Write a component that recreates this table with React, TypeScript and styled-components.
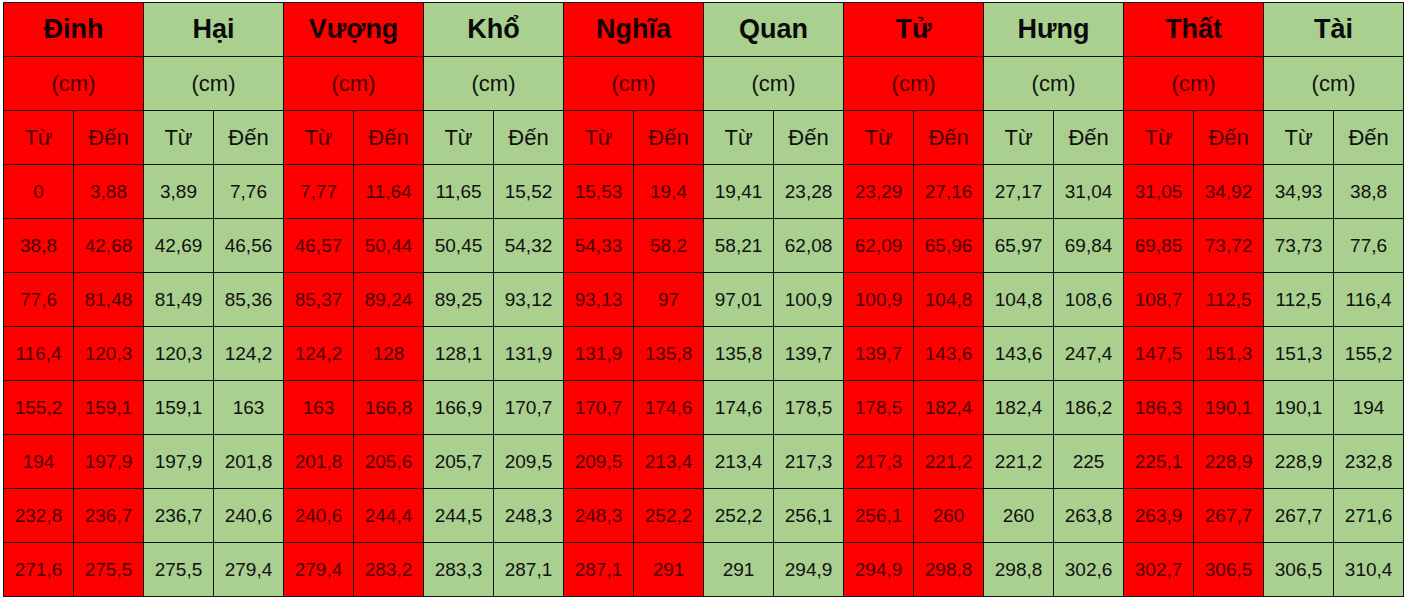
import styled, { createGlobalStyle } from 'styled-components';

const GlobalStyle = createGlobalStyle`
  html, body {
    margin: 0;
    padding: 0;
    background: #ffffff;
  }
  body {
    font-family: "Liberation Sans", Arial, sans-serif;
  }
`;

const Page = styled.div`
  padding: 2px 0 0 3px;
`;

const Table = styled.table`
  border-collapse: collapse;
  table-layout: fixed;
  width: 1401px;
`;

const Cell = styled.td<{ $red: boolean }>`
  height: 53px;
  padding: 0;
  border: 1px solid #111;
  text-align: center;
  vertical-align: middle;
  background: ${(p) => (p.$red ? '#ff0000' : '#a9d08e')};
  color: ${(p) => (p.$red ? '#4a0000' : '#111')};
  font-size: 19px;
  white-space: nowrap;
`;

const TitleCell = styled(Cell)`
  font-size: 27px;
  font-weight: bold;
  color: ${(p) => (p.$red ? '#140000' : '#0a0a0a')};
`;

const UnitCell = styled(Cell)`
  font-size: 22px;
`;

const SubCell = styled(Cell)`
  font-size: 22px;
`;

const groups = ['Đinh', 'Hại', 'Vượng', 'Khổ', 'Nghĩa', 'Quan', 'Tử', 'Hưng', 'Thất', 'Tài'];

const rows: string[][] = [
  ['0', '3,88', '3,89', '7,76', '7,77', '11,64', '11,65', '15,52', '15,53', '19,4', '19,41', '23,28', '23,29', '27,16', '27,17', '31,04', '31,05', '34,92', '34,93', '38,8'],
  ['38,8', '42,68', '42,69', '46,56', '46,57', '50,44', '50,45', '54,32', '54,33', '58,2', '58,21', '62,08', '62,09', '65,96', '65,97', '69,84', '69,85', '73,72', '73,73', '77,6'],
  ['77,6', '81,48', '81,49', '85,36', '85,37', '89,24', '89,25', '93,12', '93,13', '97', '97,01', '100,9', '100,9', '104,8', '104,8', '108,6', '108,7', '112,5', '112,5', '116,4'],
  ['116,4', '120,3', '120,3', '124,2', '124,2', '128', '128,1', '131,9', '131,9', '135,8', '135,8', '139,7', '139,7', '143,6', '143,6', '247,4', '147,5', '151,3', '151,3', '155,2'],
  ['155,2', '159,1', '159,1', '163', '163', '166,8', '166,9', '170,7', '170,7', '174,6', '174,6', '178,5', '178,5', '182,4', '182,4', '186,2', '186,3', '190,1', '190,1', '194'],
  ['194', '197,9', '197,9', '201,8', '201,8', '205,6', '205,7', '209,5', '209,5', '213,4', '213,4', '217,3', '217,3', '221,2', '221,2', '225', '225,1', '228,9', '228,9', '232,8'],
  ['232,8', '236,7', '236,7', '240,6', '240,6', '244,4', '244,5', '248,3', '248,3', '252,2', '252,2', '256,1', '256,1', '260', '260', '263,8', '263,9', '267,7', '267,7', '271,6'],
  ['271,6', '275,5', '275,5', '279,4', '279,4', '283,2', '283,3', '287,1', '287,1', '291', '291', '294,9', '294,9', '298,8', '298,8', '302,6', '302,7', '306,5', '306,5', '310,4'],
];

const isRed = (col: number) => Math.floor(col / 2) % 2 === 0;

export default function App() {
  return (
    <Page>
      <GlobalStyle />
      <Table>
        <colgroup>
          {Array.from({ length: 20 }, (_, i) => (
            <col key={i} style={{ width: 70 }} />
          ))}
        </colgroup>
        <tbody>
          <tr>
            {groups.map((g, i) => (
              <TitleCell key={g} colSpan={2} $red={i % 2 === 0}>
                {g}
              </TitleCell>
            ))}
          </tr>
          <tr>
            {groups.map((g, i) => (
              <UnitCell key={g} colSpan={2} $red={i % 2 === 0}>
                (cm)
              </UnitCell>
            ))}
          </tr>
          <tr>
            {Array.from({ length: 20 }, (_, i) => (
              <SubCell key={i} $red={isRed(i)}>
                {i % 2 === 0 ? 'Từ' : 'Đến'}
              </SubCell>
            ))}
          </tr>
          {rows.map((r, ri) => (
            <tr key={ri}>
              {r.map((v, ci) => (
                <Cell key={ci} $red={isRed(ci)}>
                  {v}
                </Cell>
              ))}
            </tr>
          ))}
        </tbody>
      </Table>
    </Page>
  );
}
